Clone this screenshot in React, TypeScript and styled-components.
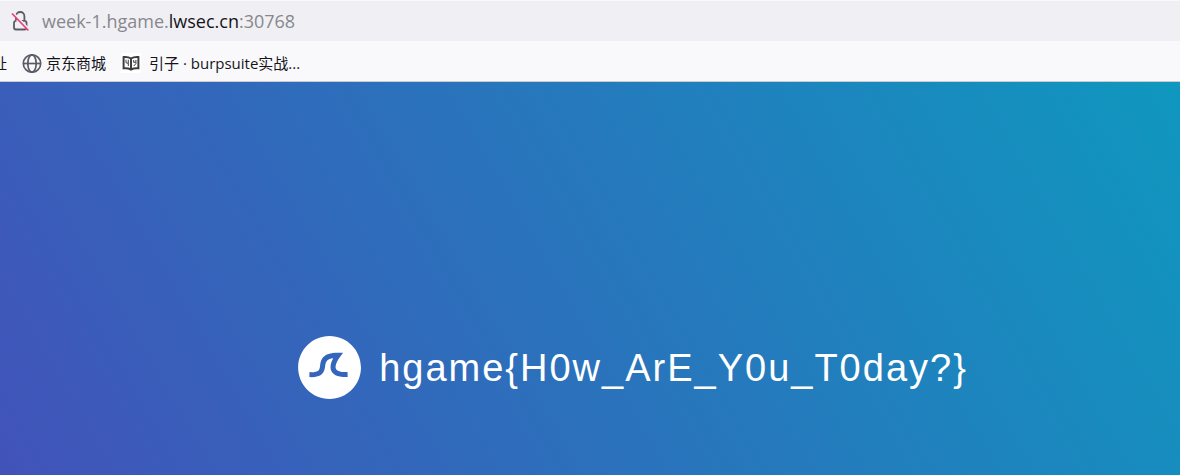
import React from "react";
import styled, { createGlobalStyle } from "styled-components";

const GlobalStyle = createGlobalStyle`
  * { box-sizing: border-box; }
  body {
    margin: 0;
    background: #f9f9fb;
    font-family: "Open Sans", "Noto Sans CJK SC", sans-serif;
  }
`;

const Page = styled.div`
  display: flex;
  flex-direction: column;
  min-height: 100vh;
  overflow: hidden;
`;

const AddressBar = styled.div`
  display: flex;
  align-items: center;
  gap: 10px;
  height: 41px;
  padding: 0 10px;
  background: #f0f0f4;
  border-top: 1px solid #f9f9fb;
`;

const SecurityButton = styled.button`
  display: flex;
  width: 22px;
  height: 22px;
  padding: 0;
  border: 0;
  background: none;
`;

const Address = styled.div`
  font-size: 18px;
  line-height: 24px;
  color: #87878d;
  white-space: nowrap;
`;

const Domain = styled.span`
  color: #15141a;
`;

const BookmarksBar = styled.nav`
  display: flex;
  align-items: center;
  gap: 15px;
  height: 41px;
  padding-top: 4px;
  background: #f9f9fb;
  border-bottom: 1px solid #cccccc;
`;

const Bookmark = styled.a<{ $gap?: number }>`
  display: flex;
  align-items: center;
  gap: ${({ $gap = 4 }) => $gap}px;
  font-size: 15px;
  line-height: 22px;
  color: #15141a;
  text-decoration: none;
  white-space: nowrap;
`;

const ClippedBookmark = styled(Bookmark)`
  width: 7px;
  justify-content: flex-end;
  overflow: hidden;
`;

const Hero = styled.main`
  flex: 1;
  display: flex;
  align-items: flex-start;
  justify-content: center;
  padding: 254px 0 64px 86px;
  background: linear-gradient(60deg, #543ab7 -36%, #00acc1 130%);
`;

const Brand = styled.div`
  display: flex;
  align-items: center;
  gap: 18px;
`;

const Logo = styled.svg`
  width: 63px;
  height: 63px;
  flex: none;
`;

const Title = styled.h1`
  margin: 0;
  font-family: "Liberation Sans", Arial, sans-serif;
  font-size: 38px;
  font-weight: 400;
  line-height: 44px;
  letter-spacing: 2px;
  color: #ffffff;
  white-space: nowrap;
`;

const InsecureIcon = () => (
  <svg width="22" height="22" viewBox="0 0 22 22" fill="none" aria-hidden="true">
    <path
      d="M6 10V6.200a4.200 4.200 0 0 1 8.400 0V10M6.500 10.800H6a2 2 0 0 0-2 2v4.700a2 2 0 0 0 2 2h8.500a2 2 0 0 0 2-2v-4.700a2 2 0 0 0-2-2H9.500"
      stroke="#5b5b66"
      strokeWidth="1.8"
    />
    <path d="M3 2.600 19 19.200" stroke="#f0f0f4" strokeWidth="2" />
    <path d="M2 3.500 18.400 20.500" stroke="#f0407a" strokeWidth="1.8" />
  </svg>
);

const GlobeIcon = () => (
  <svg width="20" height="20" viewBox="0 0 20 20" fill="none" stroke="#5b5b66" strokeWidth="1.7" aria-hidden="true">
    <circle cx="10" cy="10.500" r="8.700" />
    <ellipse cx="10" cy="10.500" rx="4.200" ry="8.700" />
    <path d="M1.300 10.500h17.400" />
  </svg>
);

const BookIcon = () => (
  <svg width="20" height="20" viewBox="0 0 20 20" fill="none" stroke="#3c3c3c" strokeWidth="2" aria-hidden="true">
    <path d="M0 0h20v20H0z" fill="#ffffff" stroke="none" />
    <path d="M10 5.500C7.800 4.100 5.200 3.900 2.600 4.100v11.200c2.600-.2 5.200 0 7.400 1.200 2.200-1.200 4.800-1.400 7.400-1.200V4.100C14.800 3.900 12.200 4.100 10 5.500zM10 5.500v11" />
    <path d="M5 6.700v3l2 .6M7.300 6.700v6.300M12.700 13l2.200-2.300V7M12.700 7v2.300h2" strokeWidth="1" />
  </svg>
);

export default function App() {
  return (
    <Page>
      <GlobalStyle />
      <AddressBar>
        <SecurityButton type="button" aria-label="Connection not secure">
          <InsecureIcon />
        </SecurityButton>
        <Address>
          week-1.hgame.<Domain>lwsec.cn</Domain>:30768
        </Address>
      </AddressBar>
      <BookmarksBar aria-label="Bookmarks">
        <ClippedBookmark href="#">址</ClippedBookmark>
        <Bookmark href="#">
          <GlobeIcon />
          京东商城
        </Bookmark>
        <Bookmark href="#" $gap={8}>
          <BookIcon />
          引子 · burpsuite实战...
        </Bookmark>
      </BookmarksBar>
      <Hero>
        <Brand>
          <Logo viewBox="0 0 500 500" aria-hidden="true">
            <path
              fill="#ffffff"
              d="M250.4,0.8C112.7,0.8,1,112.4,1,250.2c0,137.7,111.7,249.4,249.4,249.4c137.7,0,249.4-111.7,249.4-249.4C499.8,112.4,388.1,0.8,250.4,0.8z M383.8,326.3c-62,0-101.4-14.1-117.6-46.3c-17.1-34.1-2.3-75.4,13.2-104.1c-22.4,3-38.4,9.2-47.8,18.3c-11.2,10.9-13.6,26.7-16.3,45c-3.1,20.8-6.6,44.4-25.3,62.4c-19.8,19.1-51.6,26.9-100.2,24.6l1.8-39.7c35.9,1.6,59.7-2.9,70.8-13.6c8.9-8.6,11.1-22.9,13.5-39.6c6.3-42,14.8-99.4,141.4-99.4h41L333,166c-12.6,16-45.4,68.2-31.2,96.2c9.2,18.3,41.5,25.6,91.2,24.2l1.1,39.8C390.5,326.2,387.1,326.3,383.8,326.3z"
            />
          </Logo>
          <Title>{"hgame{H0w_ArE_Y0u_T0day?}"}</Title>
        </Brand>
      </Hero>
    </Page>
  );
}
